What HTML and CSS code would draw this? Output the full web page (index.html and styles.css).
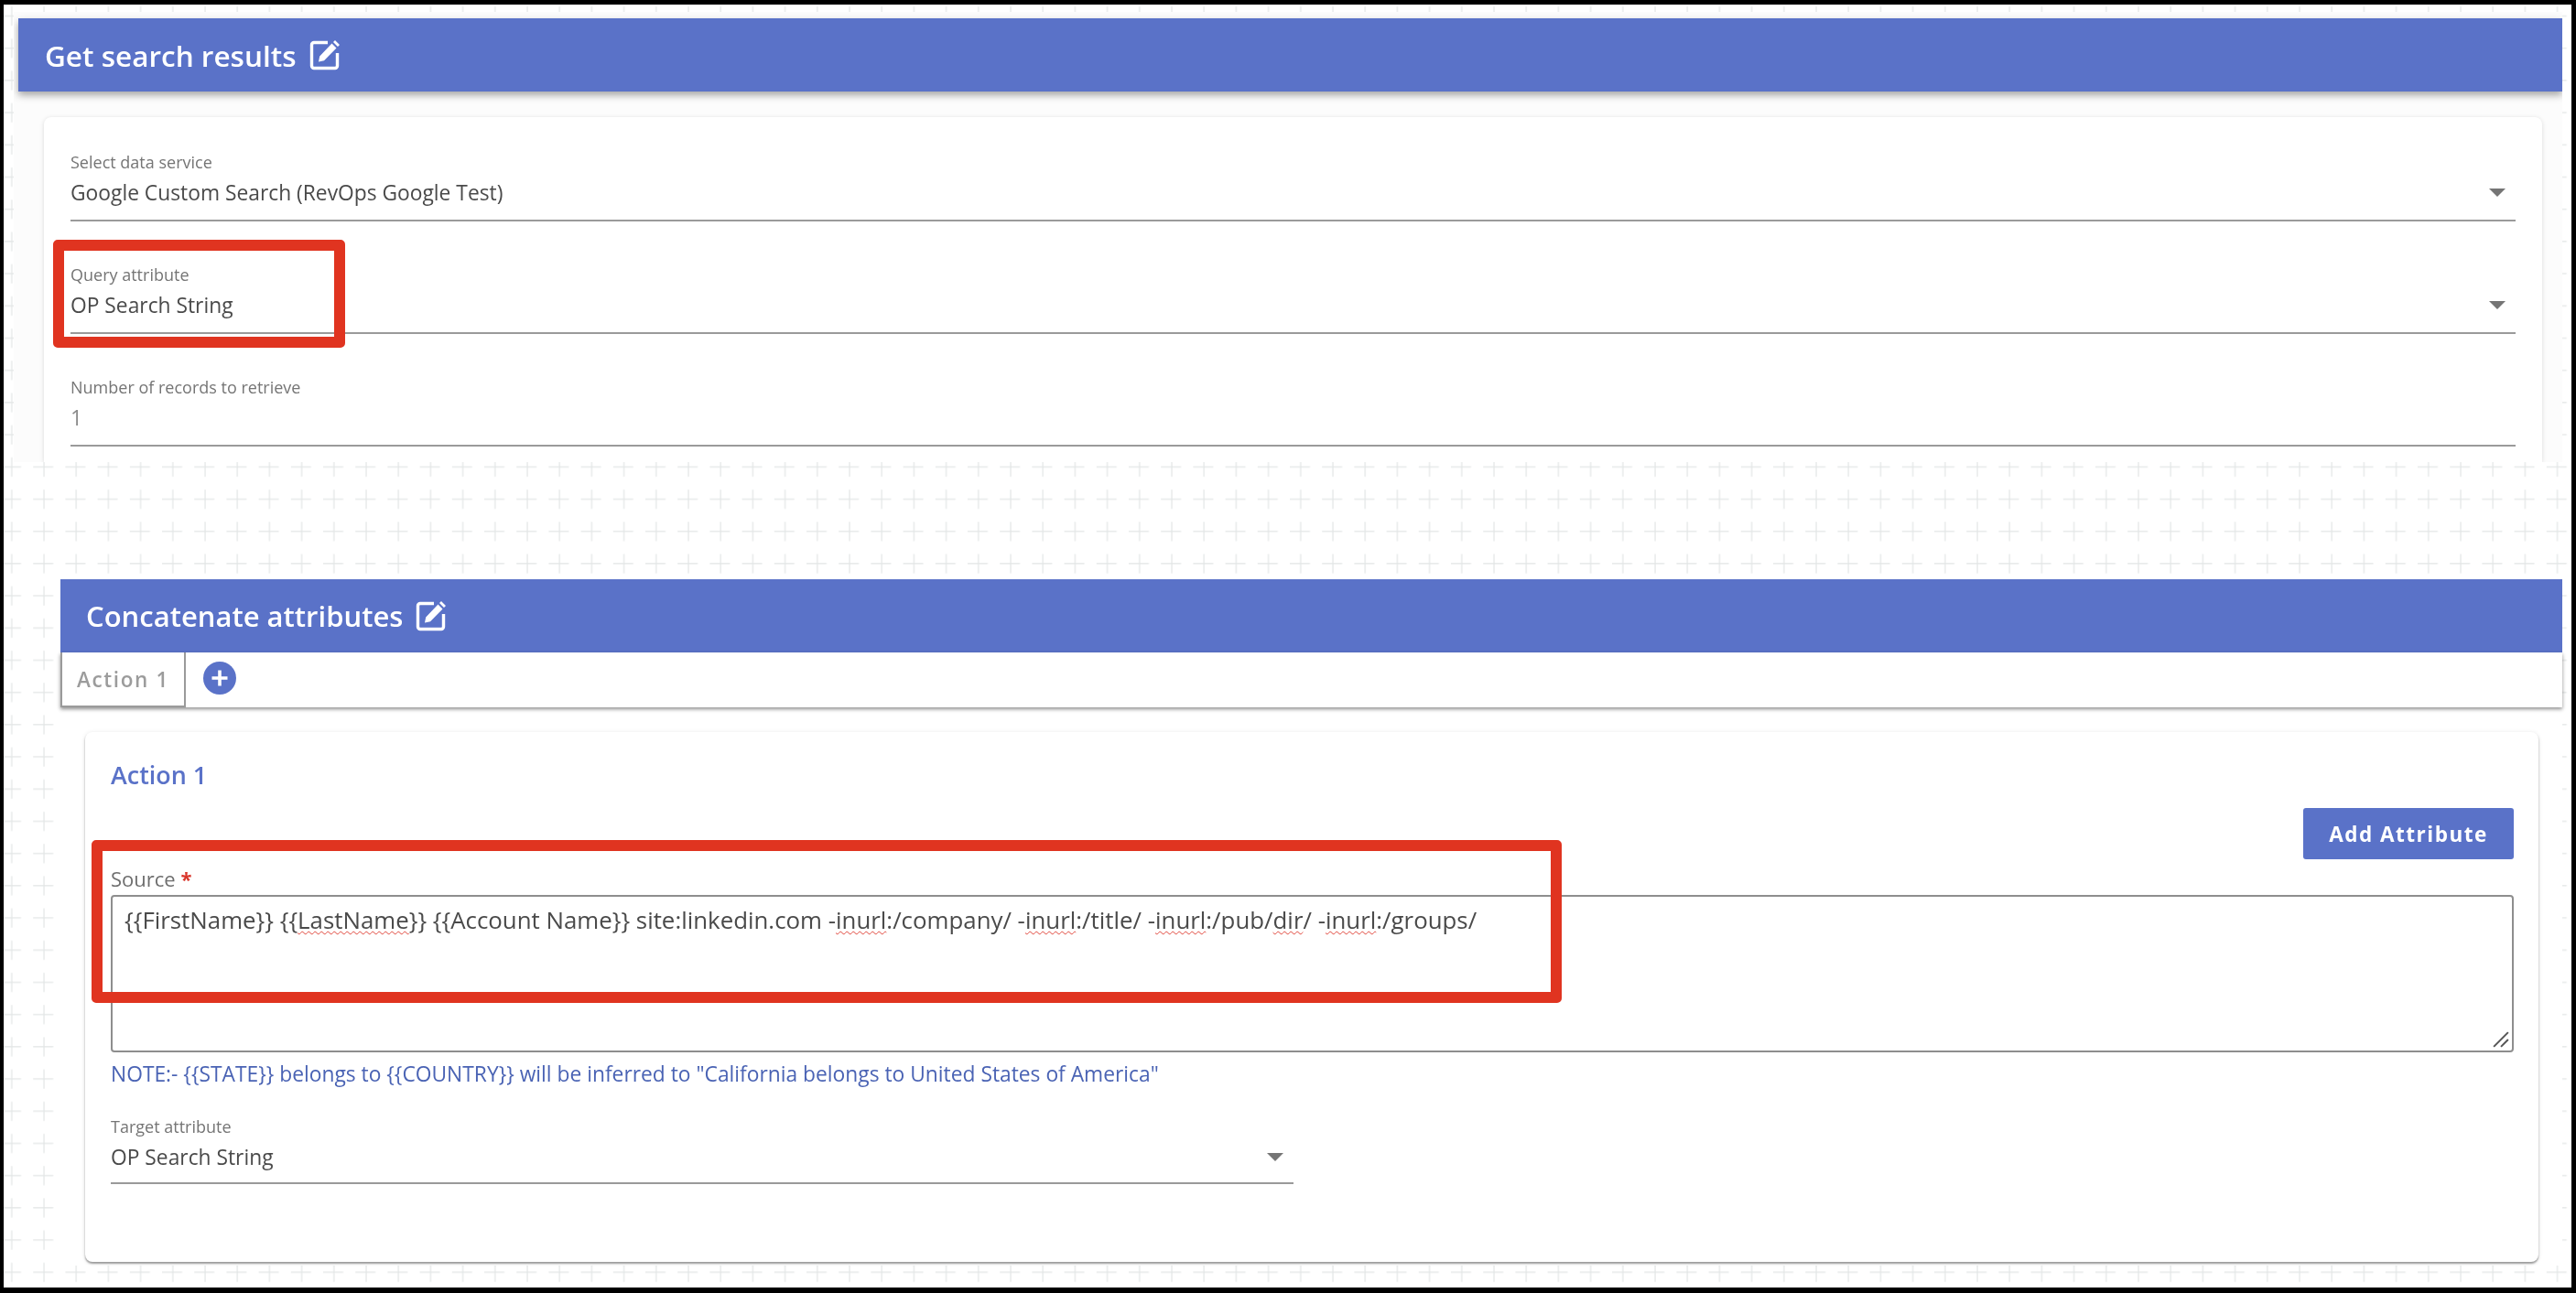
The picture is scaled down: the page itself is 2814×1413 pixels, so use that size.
FILE: index.html
```html
<!DOCTYPE html>
<html lang="en">
<head>
<meta charset="utf-8">
<title>Workflow steps</title>
<link rel="stylesheet" href="styles.css">
</head>
<body>
<main class="canvas">
  <svg class="dots" width="2805" height="1402" aria-hidden="true">
    <defs>
      <pattern id="plus" width="35.2" height="35.2" patternUnits="userSpaceOnUse" x="-3" y="-5">
        <path d="M0 17.4H22M11.8 7V28" stroke="#e2e5e5" stroke-width="1.2" fill="none"/>
      </pattern>
    </defs>
    <rect width="2805" height="1402" fill="url(#plus)"/>
  </svg>

  <section class="panel panel-search">
    <header class="bar">
      <h2 class="bar-title">Get search results</h2>
      <svg class="edit-icon" viewBox="0 0 34 34" aria-hidden="true">
        <path d="M20 3.500H5a2.500 2.500 0 0 0-2.500 2.500V29a2.500 2.500 0 0 0 2.500 2.500H28a2.500 2.500 0 0 0 2.500-2.500V15" fill="none" stroke="#fff" stroke-width="3.400"/>
        <path d="M10 24.500l1.200-6L24.500 4.500l5 5L16 23.300z M26 3l2-2 5 5-2 2z" fill="#fff"/>
      </svg>
    </header>
    <div class="card card-search">
      <div class="field">
        <span class="field-label">Select data service</span>
        <div class="field-value"><span>Google Custom Search (RevOps Google Test)</span><i class="caret"></i></div>
      </div>
      <div class="field">
        <span class="field-label">Query attribute</span>
        <div class="field-value"><span>OP Search String</span><i class="caret"></i></div>
      </div>
      <div class="field">
        <span class="field-label">Number of records to retrieve</span>
        <div class="field-value field-muted"><span>1</span></div>
      </div>
    </div>
  </section>

  <section class="panel panel-concat">
    <header class="bar bar-concat">
      <h2 class="bar-title">Concatenate attributes</h2>
      <svg class="edit-icon" viewBox="0 0 34 34" aria-hidden="true">
        <path d="M20 3.500H5a2.500 2.500 0 0 0-2.500 2.500V29a2.500 2.500 0 0 0 2.500 2.500H28a2.500 2.500 0 0 0 2.500-2.500V15" fill="none" stroke="#fff" stroke-width="3.400"/>
        <path d="M10 24.500l1.200-6L24.500 4.500l5 5L16 23.300z M26 3l2-2 5 5-2 2z" fill="#fff"/>
      </svg>
    </header>
    <nav class="tabs">
      <span class="tab">Action 1</span>
      <svg class="add-icon" viewBox="0 0 36 36" aria-hidden="true">
        <circle cx="18" cy="18" r="18" fill="#5a72c8"/>
        <path d="M18 9.500V26.500M9.500 18H26.500" stroke="#fff" stroke-width="3.600"/>
      </svg>
    </nav>
    <div class="card card-action">
      <div class="action-head">
        <h3 class="action-title">Action 1</h3>
        <button class="add-btn" type="button">Add Attribute</button>
      </div>
      <label class="source-label">Source <span class="req">*</span></label>
      <div class="source-box">{{FirstName}} {{<u>LastName</u>}} {{Account Name}} site:linkedin.com -<u>inurl</u>:/company/ -<u>inurl</u>:/title/ -<u>inurl</u>:/pub/<u>dir</u>/ -<u>inurl</u>:/groups/<svg class="grip" viewBox="0 0 16 16" aria-hidden="true"><path d="M1 15L15 1M8 15L15 8" stroke="#555" stroke-width="1.800"/></svg></div>
      <p class="note">NOTE:- {{STATE}} belongs to {{COUNTRY}} will be inferred to "California belongs to United States of America"</p>
      <div class="field field-target">
        <span class="field-label">Target attribute</span>
        <div class="field-value"><span>OP Search String</span><i class="caret"></i></div>
      </div>
    </div>
  </section>

  <div class="callout callout-query"></div>
  <div class="callout callout-source"></div>
</main>
</body>
</html>
```
FILE: styles.css
```css
* { box-sizing: border-box; }
html, body { margin: 0; height: 100%; }
body {
  background: #000;
  padding: 5px 5px 6px 4px;
  font-family: "Open Sans", "Noto Sans", sans-serif;
  color: #444;
  overflow: hidden;
}
.canvas {
  position: relative;
  width: 2805px;
  height: 1402px;
  background: #fff;
  overflow: hidden;
  filter: blur(0.55px);
}
.dots { position: absolute; left: 0; top: 0; }

.panel { position: relative; background: #fff; }
.panel-search {
  margin: 8px 10px 0 11px;
  height: 492px;
  padding: 7px 0 0 5px;
  background: #fcfcfc;
  overflow: hidden;
}
.panel-concat {
  margin: 128px 10px 0 62px;
  height: 750px;
}

.bar {
  display: flex;
  align-items: center;
  gap: 14px;
  height: 80px;
  padding-left: 29px;
  background: #5a72c8;
  box-shadow: 0 4px 8px rgba(0, 0, 0, .35);
}
.bar-concat { box-shadow: none; padding-left: 28px; }
.bar-title {
  margin: 0;
  font-size: 31.500px;
  font-weight: 600;
  color: #fff;
}
.bar-concat .bar-title { font-size: 31px; }
.edit-icon { width: 34px; height: 34px; flex: none; }

.card {
  background: #fff;
  border-radius: 8px;
  box-shadow: 0 1px 5px rgba(0, 0, 0, .14);
}
.card-search {
  margin: 28px 22px 0 28px;
  height: 377px;
  padding: 38px 29px 0 29px;
  border-radius: 8px 8px 0 0;
}

.field { display: flex; flex-direction: column; }
.field + .field { margin-top: 47px; }
.field-label {
  font-size: 18px;
  line-height: 22px;
  color: #757575;
}
.field-value {
  display: flex;
  justify-content: space-between;
  align-items: center;
  height: 54px;
  padding: 0 0 8px;
  font-size: 22.800px;
  color: #4a4a4a;
  border-bottom: 2px solid #9a9a9a;
}
.field-muted { color: #8a8a8a; }
.caret {
  width: 0;
  height: 0;
  margin-right: 11px;
  border-left: 9px solid transparent;
  border-right: 9px solid transparent;
  border-top: 9px solid #757575;
}

.tabs {
  display: flex;
  align-items: center;
  gap: 19px;
  height: 60px;
  background: #fff;
  box-shadow: 0 2px 4px rgba(0, 0, 0, .45);
}
.tab {
  display: flex;
  align-items: center;
  justify-content: center;
  width: 137px;
  height: 60px;
  border: 2px solid #9a9a9a;
  border-top: 0;
  font-size: 22.500px;
  font-weight: 600;
  letter-spacing: 1.600px;
  color: #9c9c9c;
}
.add-icon { width: 36px; height: 36px; margin-top: -4px; }

.card-action {
  margin: 27px 26px 0 27px;
  height: 579px;
  padding: 30px 27px 0 28px;
  box-shadow: 0 1px 5px rgba(0, 0, 0, .12), 0 2px 2px rgba(0, 0, 0, .35);
}
.action-head {
  display: flex;
  justify-content: space-between;
  align-items: flex-start;
  height: 112px;
}
.action-title {
  margin: 0;
  font-size: 26.900px;
  line-height: 33px;
  font-weight: 600;
  color: #5a72c8;
}
.add-btn {
  width: 230px;
  height: 56px;
  margin-top: 53px;
  border: 0;
  border-radius: 3px;
  background: #5a72c8;
  color: #fff;
  font: 700 22.500px "Open Sans", sans-serif;
  letter-spacing: 1.500px;
}
.source-label {
  display: block;
  font-size: 22px;
  line-height: 36px;
  color: #6e6e6e;
}
.req { color: #d9362b; font-weight: 700; }
.source-box {
  position: relative;
  height: 172px;
  padding: 8px 13px;
  border: 2px solid #8e8e8e;
  border-radius: 4px;
  font-size: 25.850px;
  line-height: 34px;
  color: #4a4a4a;
}
.source-box u {
  text-decoration: underline wavy #e0453a 1px;
  text-underline-offset: 2px;
}
.grip {
  position: absolute;
  right: 3px;
  bottom: 3px;
  width: 18px;
  height: 18px;
}
.note {
  margin: 10px 0 0;
  font-size: 22.800px;
  line-height: 28px;
  color: #4a63b4;
}
.field-target {
  width: 1292px;
  margin-top: 32px;
}
.field-target .field-value { height: 52px; padding-bottom: 6px; }

.callout {
  position: absolute;
  border: 12px solid #e03420;
  border-radius: 5px;
}
.callout-query { left: 54px; top: 257px; width: 319px; height: 118px; }
.callout-source { left: 96px; top: 913px; width: 1606px; height: 178px; }
```
